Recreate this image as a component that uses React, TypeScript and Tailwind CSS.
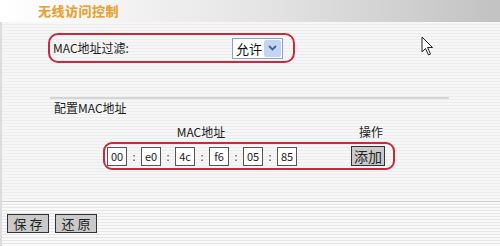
import React from "react";

const cjk = "font-['SimSun','Noto_Sans_CJK_SC',sans-serif]";

function MacInput({ value }: { value: string }) {
  return (
    <div className="w-[20px] h-[19px] bg-white border border-[#555] flex items-center justify-center text-[11px] leading-none text-[#222]">
      {value}
    </div>
  );
}

function Colon() {
  return <div className="w-[14px] text-center text-[11px] text-[#444]">:</div>;
}

function GrayButton({ label, className = "" }: { label: string; className?: string }) {
  return (
    <button className={`h-[19px] bg-[#cacaca] border border-[#333] text-[13px] leading-none text-[#222] flex items-center justify-center ${className}`}>
      {label}
    </button>
  );
}

export default function App() {
  const mac = ["00", "e0", "4c", "f6", "05", "85"];

  return (
    <div className={`w-[500px] h-[246px] bg-white overflow-hidden ${cjk}`}>
      {/* header band */}
      <div className="h-[22px] bg-gradient-to-r from-white via-[#e6e6e6] to-[#c2c2c2] flex items-center pl-[38px]">
        <span className="text-[13px] font-bold text-[#e3a23a] tracking-[0.5px] [text-shadow:0_0_1px_#f5d9a0]">无线访问控制</span>
      </div>

      {/* body */}
      <div className="relative h-[179px] border-l-2 border-[#dcdcdc] bg-[repeating-linear-gradient(#f6f6f6_0_2px,#ededed_2px_3px)] pt-[11px] pl-[46px]">
        <div className="w-[247px] h-[30px] rounded-[10px] border-2 border-[#c62a3e] flex items-center justify-between pl-[3px] pr-[10px]">
          <span className="text-[12px] text-[#222]">MAC地址过滤:</span>
          <div className="h-[21px] w-[51px] bg-white border border-[#8aa0bb] flex items-center justify-between pl-[3px] pr-[1px]">
            <span className="text-[13px] leading-none text-[#111]">允许</span>
            <div className="w-[17px] h-[17px] bg-[#c3d5f7] rounded-[2px] flex items-center justify-center">
              <svg width="9" height="6" viewBox="0 0 9 6">
                <path d="M1 1 L4.5 4.5 L8 1" stroke="#4d6185" strokeWidth="1.8" fill="none" />
              </svg>
            </div>
          </div>
        </div>

        {/* mouse pointer */}
        <svg className="absolute left-[419px] top-[14px]" width="14" height="21" viewBox="0 0 14 21">
          <path d="M1 1 L1 16 L4.5 12.5 L7.5 19 L9.5 18 L6.5 11.5 L11.5 11.5 Z" fill="white" stroke="#222" strokeWidth="1" strokeLinejoin="round" />
        </svg>

        <div className="mt-[34px] ml-[2px] w-[399px] h-[2px] bg-[#d4d4d4]" />

        <div className="mt-[2px] ml-[6px] text-[12px] leading-[14px] text-[#222]">配置MAC地址</div>

        <div className="mt-[10px] flex text-[12px] leading-[14px] text-[#222]">
          <div className="w-[306px] text-center">MAC地址</div>
          <div className="ml-[1px] w-[32px] text-center">操作</div>
        </div>

        <div className="mt-[3px] ml-[55px] w-[292px] h-[28px] rounded-[9px] border-2 border-[#c62a3e] flex items-center pl-[2px]">
          {mac.map((m, i) => (
            <React.Fragment key={i}>
              {i > 0 && <Colon />}
              <MacInput value={m} />
            </React.Fragment>
          ))}
          <GrayButton label="添加" className="ml-[54px] w-[34px] h-[20px] text-[14px]" />
        </div>
      </div>

      {/* footer */}
      <div className="h-[45px] border-t border-[#cfcfcf] border-l-2 border-l-[#dcdcdc] bg-[repeating-linear-gradient(#f9f9f9_0_2px,#e6e6e6_2px_3px)] flex items-start gap-[6px] pt-[12px] pl-[5px]">
        <GrayButton label="保 存" className="w-[42px]" />
        <GrayButton label="还 原" className="w-[42px]" />
      </div>
    </div>
  );
}
